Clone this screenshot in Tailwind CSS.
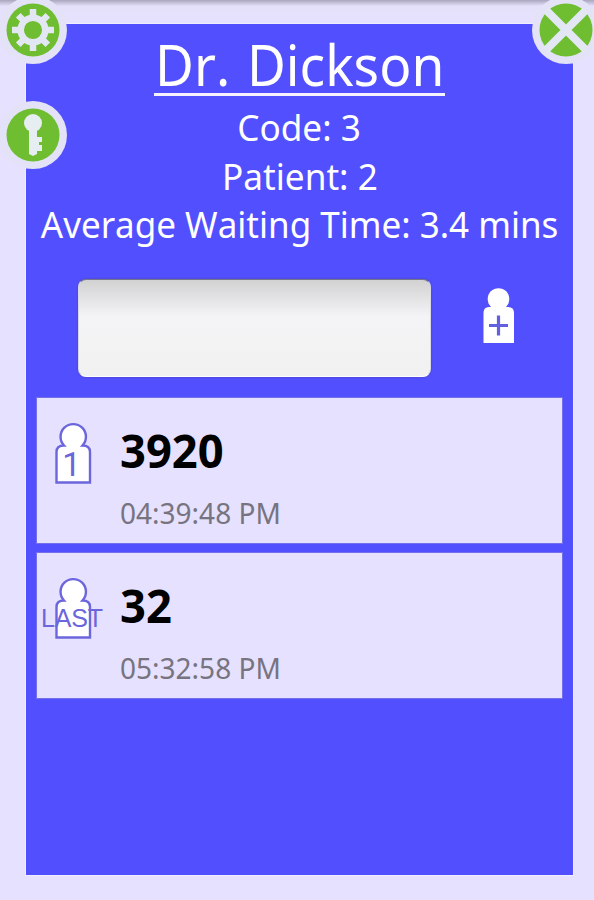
<!DOCTYPE html>
<html lang="en">
<head>
  <meta charset="UTF-8" />
  <title>Dr. Dickson</title>
  <script src="https://cdn.jsdelivr.net/npm/@tailwindcss/browser@4"></script>
</head>
<body class="bg-[#e6e1ff] w-[594px] h-[900px] overflow-hidden relative font-['Noto_Sans','Open_Sans',sans-serif] [font-kerning:none]">
  <!-- Shadow under the status bar -->
  <div class="h-6 bg-linear-to-b from-[#aaa6be] via-[#e6e1fa] via-25% to-[#e6e1ff]"></div>

  <main class="ml-[26px] w-[547px] h-[851px] bg-[#524fff] px-[11px] outline outline-[#f0edff]">
    <!-- Doctor info -->
    <header class="h-[255px] pt-px text-white flex flex-col items-center whitespace-nowrap">
      <h1 class="h-[78px] flex flex-col items-center">
        <span class="block h-[68px] text-[57px] leading-[78px] [word-spacing:3px] scale-x-[0.935]">Dr. Dickson</span>
        <span class="block w-[291px] h-[3px] bg-[#f4f2ff]"></span>
      </h1>
      <p class="text-[37px] leading-[48.5px] scale-x-[0.95]">Code: 3</p>
      <p class="text-[37px] leading-[48.5px] scale-x-[0.95]">Patient: 2</p>
      <p class="text-[37px] leading-[48.5px] scale-x-[0.946]">Average Waiting Time: 3.4 mins</p>
    </header>

    <!-- Add patient -->
    <div class="h-[119px] pl-[41px] flex items-start">
      <input type="text" aria-label="Patient" class="w-[353px] h-[98px] rounded-lg bg-linear-to-b from-[#d2d2d3] via-[#f4f4f6] via-38% to-[#f1f1f1] border border-t-[#77778c] border-x-[#d8d8e4] border-b-white shadow-[0_0_2px_#444491]" />
      <svg class="ml-[50px] mt-[8px] w-[34px] h-[58px]" viewBox="0 0 34 58">
        <circle cx="17.500" cy="12" r="10.800" fill="#fff" />
        <path d="M8 20H27Q33 20 33 26V56H2.500V26Q2.500 20 8 20Z" fill="#fff" />
        <path d="M17.500 28.500V48.500M8 38.500H27" stroke="#6260df" stroke-width="3.200" />
      </svg>
    </div>

    <!-- Queue -->
    <ul class="flex flex-col gap-[10px]">
      <li class="h-[145px] bg-[#e6e1ff] flex outline outline-[#7470ec]">
        <svg class="w-[72px] h-[96px] shrink-0" viewBox="0 0 72 96">
          <path d="M27 47.500A12.700 12.700 0 1 1 45.500 47.500Q53 47.500 53 54V84.500H19.500V54Q19.500 47.500 27 47.500Z" fill="#fff" stroke="#6c66dc" stroke-width="2.400" />
          <text x="34.500" y="78" text-anchor="middle" font-family="Roboto" font-size="33" fill="#6c66dc">1</text>
        </svg>
        <div class="pl-[11px]">
          <p class="mt-[21px] text-[46px] leading-[63px] font-bold text-black origin-left scale-x-[0.985]">3920</p>
          <p class="mt-[11px] text-[29px] leading-[40px] text-[#77747f] origin-left scale-x-[0.966]">04:39:48 PM</p>
        </div>
      </li>
      <li class="h-[145px] bg-[#e6e1ff] flex outline outline-[#7470ec]">
        <svg class="w-[72px] h-[96px] shrink-0" viewBox="0 0 72 96">
          <path d="M27 47.500A12.700 12.700 0 1 1 45.500 47.500Q53 47.500 53 54V84.500H19.500V54Q19.500 47.500 27 47.500Z" fill="#fff" stroke="#6c66dc" stroke-width="2.400" />
          <text x="4" y="74" textLength="62" font-family="Liberation Sans" font-size="25" fill="#6c66dc">LAST</text>
        </svg>
        <div class="pl-[11px]">
          <p class="mt-[21px] text-[46px] leading-[63px] font-bold text-black origin-left scale-x-[0.985]">32</p>
          <p class="mt-[11px] text-[29px] leading-[40px] text-[#77747f] origin-left scale-x-[0.966]">05:32:58 PM</p>
        </div>
      </li>
    </ul>
  </main>

  <!-- Corner buttons -->
  <button aria-label="Settings" class="absolute left-[-1px] top-[-4px]">
    <svg class="w-[68px] h-[68px]" viewBox="-34 -34 68 68">
      <circle r="34" fill="#e3e2f7" />
      <circle r="26.500" fill="#6fbd30" />
      <g stroke="#e3e7f4" stroke-width="6.500">
        <path d="M0 -21V21M-21 0H21M-14.800 -14.800L14.800 14.800M-14.800 14.800L14.800 -14.800" />
      </g>
      <circle r="12.300" fill="#6fbd30" stroke="#e3e7f4" stroke-width="6.500" />
    </svg>
  </button>
  <button aria-label="Login" class="absolute left-[-1px] top-[101px]">
    <svg class="w-[68px] h-[68px]" viewBox="-34 -34 68 68">
      <circle r="34" fill="#e3e2f7" />
      <circle r="26.500" fill="#6fbd30" />
      <circle cy="-12" r="9" fill="#e6eef1" />
      <path d="M-4 -6H4V2H9V7H6V10H9V16H4V19L0 21L-4 19Z" fill="#e6eef1" />
    </svg>
  </button>
  <button aria-label="Close" class="absolute left-[532px] top-[-4px]">
    <svg class="w-[68px] h-[68px]" viewBox="-34 -34 68 68">
      <circle r="34" fill="#e3e2f7" />
      <circle r="26.500" fill="#6fbd30" />
      <path d="M-20 -20L20 20M-20 20L20 -20" stroke="#e3e7f4" stroke-width="8" />
    </svg>
  </button>
</body>
</html>
